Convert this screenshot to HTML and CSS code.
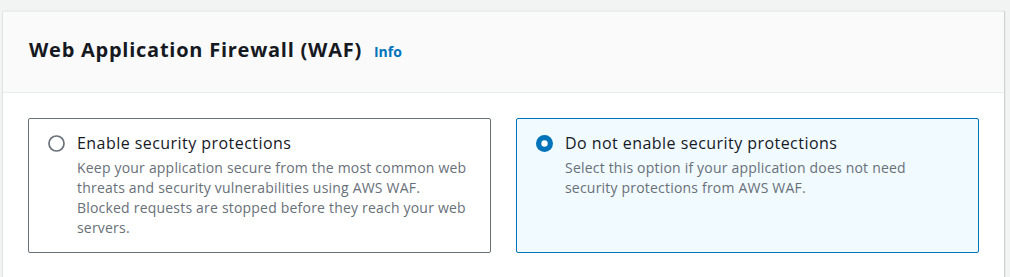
FILE: index.html
```html
<!DOCTYPE html>
<html lang="en">
<head>
    <meta charset="UTF-8">
    <meta name="viewport" content="width=device-width, initial-scale=1.0">
    <title>Web Application Firewall (WAF)</title>
    <link rel="stylesheet" href="styles.css">
</head>
<body>
    <div class="container">
        <div class="container-header">
            <h2>Web Application Firewall (WAF)</h2>
            <a class="info-link" href="#">Info</a>
        </div>
        <div class="container-body">
            <div class="tiles">
                <label class="tile">
                    <span class="radio">
                        <svg width="17" height="17" viewBox="0 0 17 17">
                            <circle cx="8.5" cy="8.5" r="7.5" fill="#fff" stroke="#687078" stroke-width="1.7"/>
                        </svg>
                    </span>
                    <span class="tile-text">
                        <span class="tile-label">Enable security protections</span>
                        <span class="tile-desc">Keep your application secure from the most common web threats and security vulnerabilities using AWS WAF. Blocked requests are stopped before they reach your web servers.</span>
                    </span>
                </label>
                <label class="tile tile-selected">
                    <span class="radio">
                        <svg width="17" height="17" viewBox="0 0 17 17">
                            <circle cx="8.5" cy="8.5" r="8.5" fill="#0073bb"/>
                            <circle cx="8.5" cy="8.5" r="3.2" fill="#fff"/>
                        </svg>
                    </span>
                    <span class="tile-text">
                        <span class="tile-label">Do not enable security protections</span>
                        <span class="tile-desc">Select this option if your application does not need security protections from AWS WAF.</span>
                    </span>
                </label>
            </div>
        </div>
    </div>
</body>
</html>
```

FILE: styles.css
```css
body {
    margin: 0;
    background: #f2f3f3;
    font-family: "Open Sans", "Noto Sans", Arial, sans-serif;
    color: #16191f;
}
.container {
    margin: 11px 0 0 2px;
    width: 1001px;
    background: #fff;
    border-top: 1px solid #eaeded;
    border-left: 1px solid #e1e4e4;
    box-shadow: 1px 0 1px 0 rgba(0, 28, 36, 0.15);
}
.container-header {
    display: flex;
    align-items: baseline;
    height: 81px;
    padding: 24px 26px 0 26px;
    background: #fafafa;
    border-bottom: 1px solid #eaeded;
    box-sizing: border-box;
}
.container-header h2 {
    margin: 0;
    font-size: 20px;
    line-height: 28px;
    font-weight: 700;
    letter-spacing: 0.75px;
}
.info-link {
    margin-left: 12px;
    font-size: 14px;
    font-weight: 700;
    color: #0073bb;
    text-decoration: none;
}
.container-body {
    padding: 25px 25px 24px 25px;
}
.tiles {
    display: grid;
    grid-template-columns: 1fr 1fr;
    gap: 25px;
}
.tile {
    display: flex;
    padding: 13px 20px 14px 19px;
    border: 1px solid #687078;
    border-radius: 2px;
    background: #fff;
}
.tile-selected {
    border-color: #0073bb;
    background: #f1faff;
}
.radio {
    flex: none;
    width: 17px;
    height: 17px;
    margin-top: 3px;
    margin-right: 12px;
}
.radio svg {
    display: block;
}
.tile-text {
    display: flex;
    flex-direction: column;
}
.tile-label {
    font-size: 16px;
    line-height: 22px;
    letter-spacing: 0.45px;
}
.tile-desc {
    margin-top: 4px;
    font-size: 14px;
    line-height: 20px;
    color: #687078;
    letter-spacing: 0.2px;
}
```
